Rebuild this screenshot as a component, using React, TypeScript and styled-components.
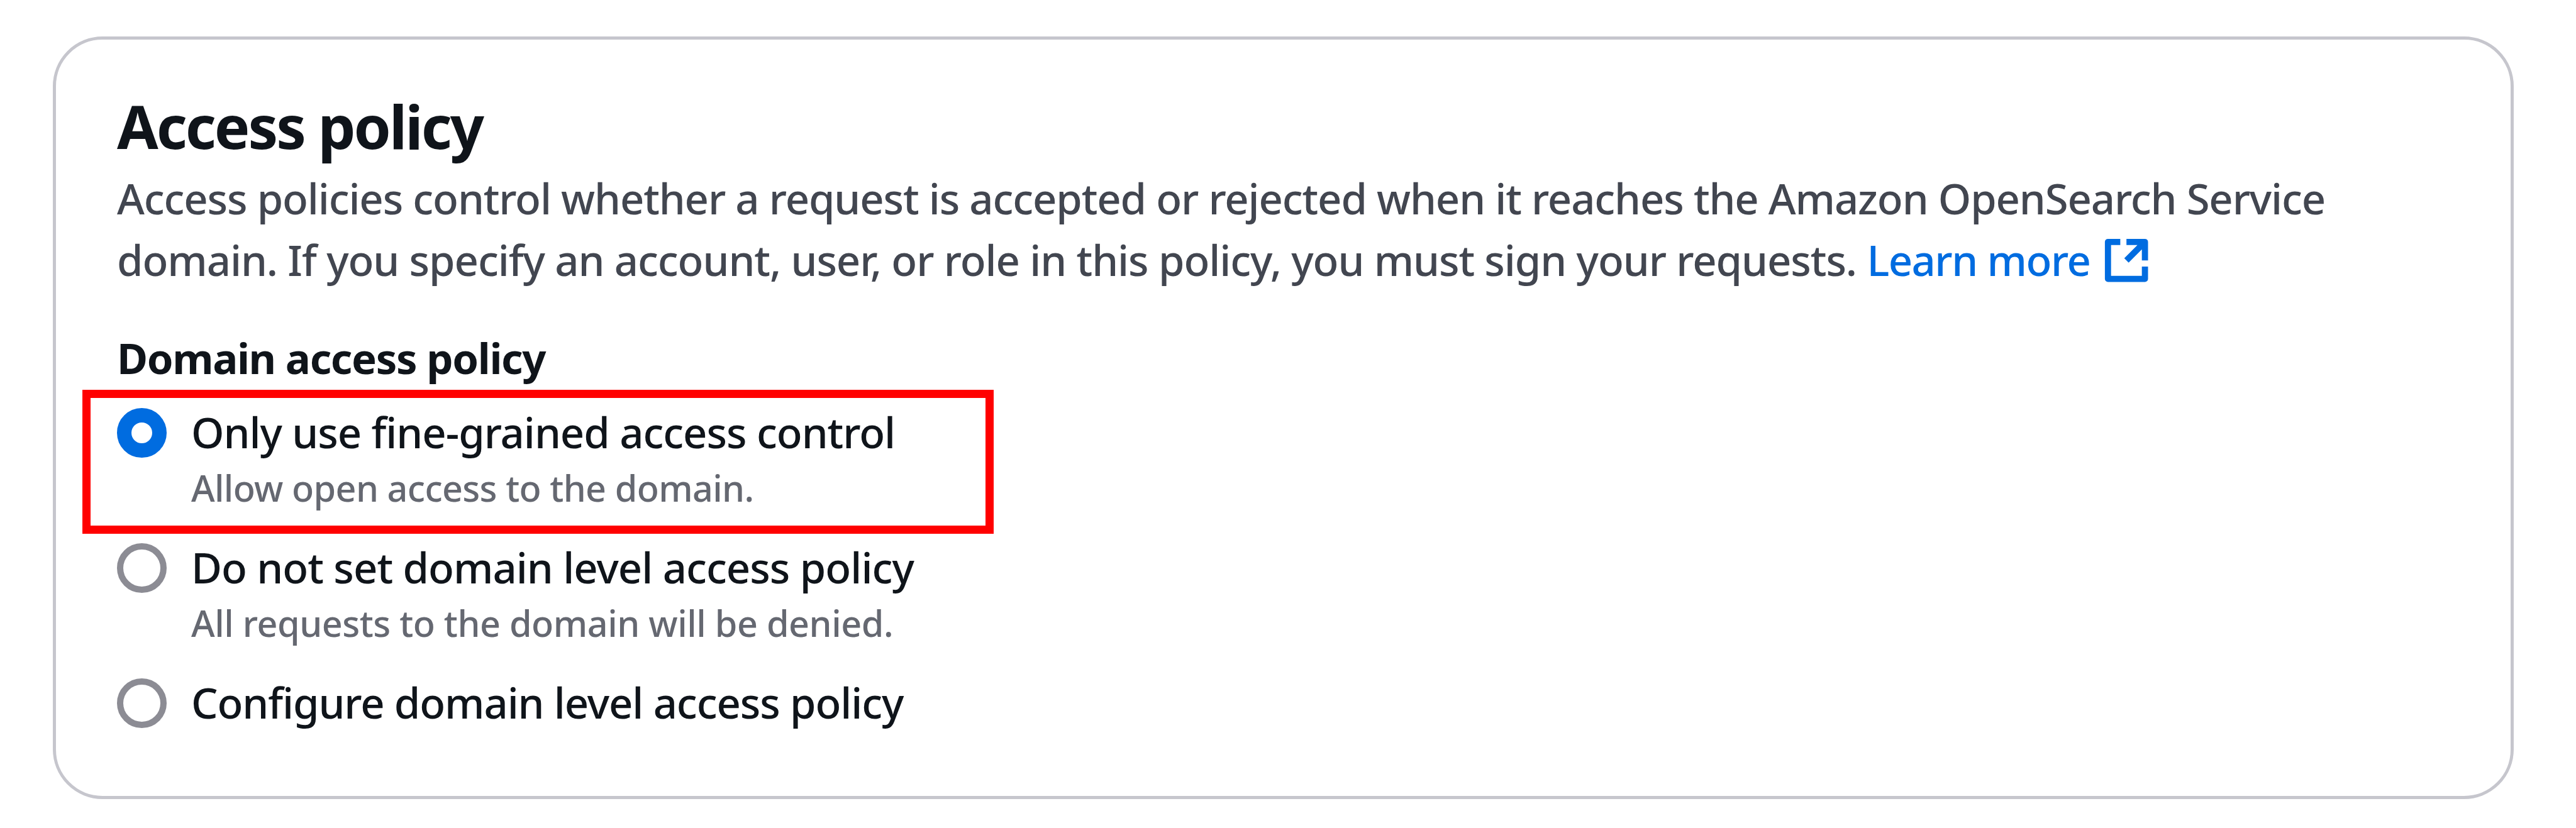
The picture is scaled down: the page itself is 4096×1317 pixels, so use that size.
import React from "react";
import styled, { createGlobalStyle } from "styled-components";

const GlobalStyle = createGlobalStyle`
  * { box-sizing: border-box; }
  body {
    margin: 0;
    background: #ffffff;
    overflow: hidden;
    font-family: "Noto Sans", "Open Sans", sans-serif;
    color: #0f141a;
  }
`;

const Page = styled.main`
  height: 1317px;
  padding: 58px 99px 46px 84px;
`;

const Card = styled.section`
  height: 100%;
  border: 5px solid #c6c6cd;
  border-radius: 79px;
  padding: 78px 97px 0;
  background: #ffffff;
`;

const Title = styled.h2`
  margin: 0 0 7px;
  font-size: 95px;
  line-height: 118px;
  font-weight: 700;
  letter-spacing: -3px;
  white-space: nowrap;
`;

const Description = styled.p`
  margin: 0;
  font-size: 67px;
  line-height: 98px;
  font-weight: 500;
  color: #424650;
`;

const Line = styled.span<{ $tracking: number }>`
  display: block;
  white-space: nowrap;
  letter-spacing: ${(p) => p.$tracking}px;
`;

const Link = styled.a`
  color: #006ce0;
  letter-spacing: -1.52px;
  text-decoration: none;
`;

const ExternalIcon = styled.svg`
  width: 78.4px;
  height: 78.4px;
  margin-left: 19px;
  vertical-align: -14px;
  fill: none;
  stroke: currentColor;
  stroke-width: 2;
  stroke-linejoin: round;
`;

const Field = styled.div`
  margin-top: 58px;
`;

const FieldLabel = styled.div`
  font-size: 67px;
  line-height: 98px;
  font-weight: 700;
  letter-spacing: -1.36px;
`;

const Options = styled.div`
  display: flex;
  flex-direction: column;
  gap: 37px;
  margin-top: 19px;
`;

const Option = styled.label`
  position: relative;
  display: flex;
  align-items: flex-start;
  gap: 39px;
`;

const Radio = styled.span<{ $checked: boolean }>`
  flex: none;
  width: 79px;
  height: 79px;
  margin-top: 12px;
  border: ${(p) => (p.$checked ? "23px solid #006ce0" : "10px solid #8c8c94")};
  border-radius: 50%;
`;

const OptionText = styled.div`
  padding-top: 1px;
`;

const OptionLabel = styled.div<{ $tracking: number }>`
  font-size: 67px;
  line-height: 98px;
  font-weight: 500;
  white-space: nowrap;
  letter-spacing: ${(p) => p.$tracking}px;
`;

const OptionHint = styled.div<{ $tracking: number }>`
  padding-top: 1px;
  font-size: 57.5px;
  line-height: 78px;
  font-weight: 500;
  color: #656871;
  white-space: nowrap;
  letter-spacing: ${(p) => p.$tracking}px;
`;

const Highlight = styled.span`
  position: absolute;
  left: -55px;
  top: -17px;
  width: 1449px;
  height: 229px;
  border: 13px solid #ff0000;
  pointer-events: none;
`;

const options = [
  {
    label: "Only use fine-grained access control",
    labelTracking: -1.05,
    hint: "Allow open access to the domain.",
    hintTracking: -0.66,
    checked: true,
  },
  {
    label: "Do not set domain level access policy",
    labelTracking: -1,
    hint: "All requests to the domain will be denied.",
    hintTracking: -0.48,
    checked: false,
  },
  {
    label: "Configure domain level access policy",
    labelTracking: -1.11,
    checked: false,
  },
];

export default function App() {
  return (
    <Page>
      <GlobalStyle />
      <Card>
        <Title>Access policy</Title>
        <Description>
          <Line $tracking={-1.15}>
            Access policies control whether a request is accepted or rejected when it reaches the Amazon OpenSearch Service
          </Line>
          <Line $tracking={-1.08}>
            domain. If you specify an account, user, or role in this policy, you must sign your requests.{" "}
            <Link>
              Learn more
              <ExternalIcon viewBox="0 0 16 16">
                <path d="M14 8V2H8M14 2 8 8M6 2H2v12h12v-4" />
              </ExternalIcon>
            </Link>
          </Line>
        </Description>
        <Field>
          <FieldLabel>Domain access policy</FieldLabel>
          <Options>
            {options.map((o) => (
              <Option key={o.label}>
                <Radio $checked={o.checked} />
                <OptionText>
                  <OptionLabel $tracking={o.labelTracking}>{o.label}</OptionLabel>
                  {o.hint && <OptionHint $tracking={o.hintTracking ?? 0}>{o.hint}</OptionHint>}
                </OptionText>
                {o.checked && <Highlight />}
              </Option>
            ))}
          </Options>
        </Field>
      </Card>
    </Page>
  );
}
